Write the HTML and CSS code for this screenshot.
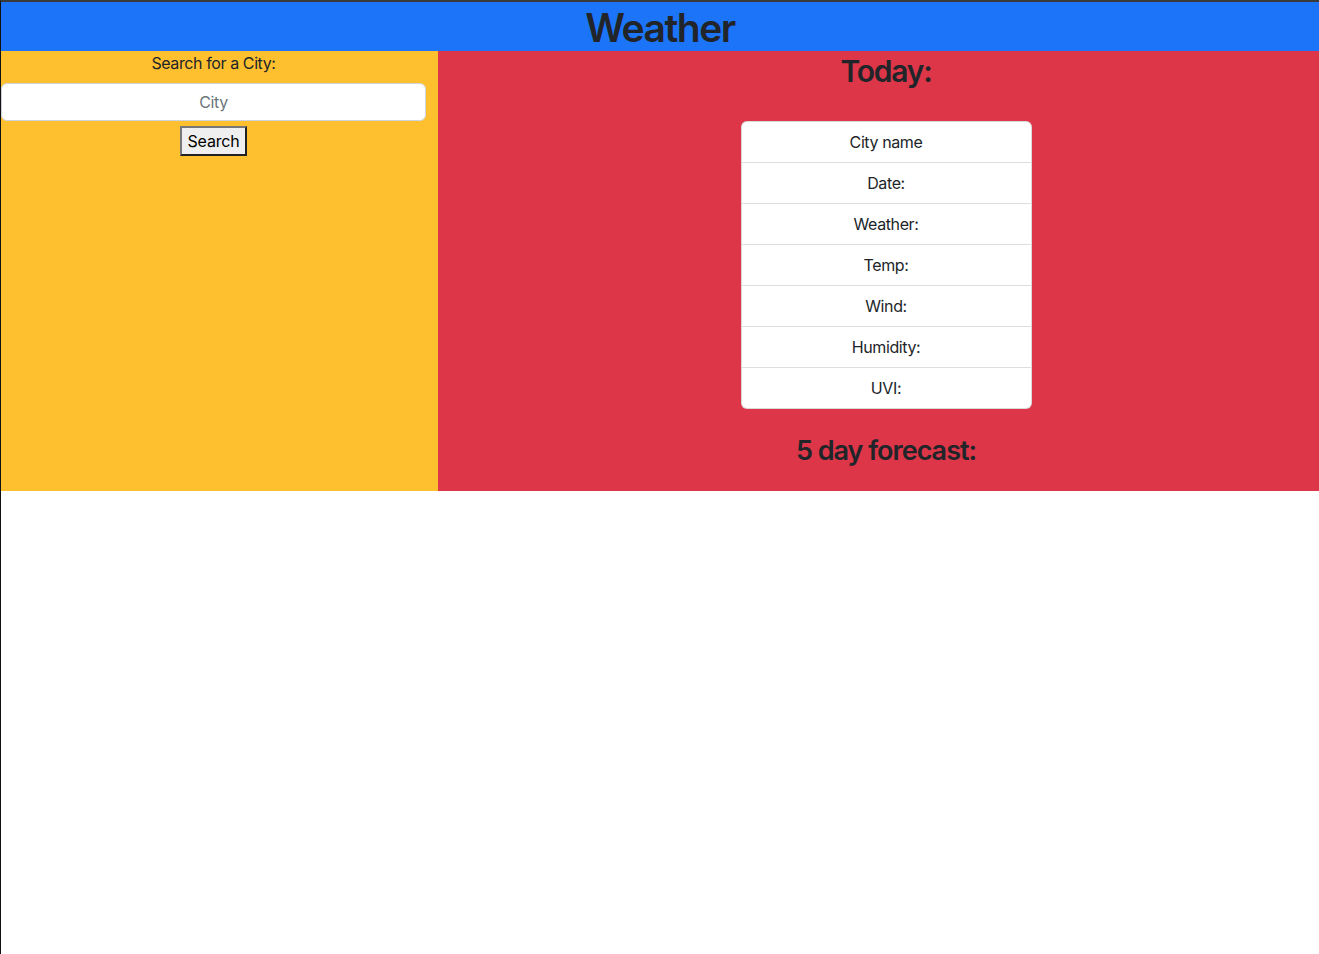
FILE: index.html
```html
<!DOCTYPE html>
<html lang="en">
<head>
<meta charset="utf-8">
<title>Weather</title>
<link rel="stylesheet" href="styles.css">
</head>
<body>
<div class="frame">
  <header class="topbar">
    <h1 class="title">Weather</h1>
  </header>
  <div class="row">
    <aside class="search-col">
      <p class="search-label">Search for a City:</p>
      <input class="city-input" type="text" placeholder="City">
      <button class="search-btn" type="button">Search</button>
    </aside>
    <main class="today-col">
      <h2 class="today-title">Today:</h2>
      <ul class="card-list">
        <li class="card-item">City name</li>
        <li class="card-item">Date:</li>
        <li class="card-item">Weather:</li>
        <li class="card-item">Temp:</li>
        <li class="card-item">Wind:</li>
        <li class="card-item">Humidity:</li>
        <li class="card-item">UVI:</li>
      </ul>
      <h3 class="forecast-title">5 day forecast:</h3>
    </main>
  </div>
</div>
</body>
</html>
```
FILE: styles.css
```css
* { box-sizing: border-box; }
html, body { margin: 0; padding: 0; background: #fff; }
body {
  font-family: Inter, "Noto Sans", "Liberation Sans", sans-serif;
  color: #212529;
  font-size: 16px;
  line-height: 1.5;
  letter-spacing: -0.4px;
}
.frame {
  min-height: 954px;
  border-top: 2px solid #3a3a3a;
  border-left: 1px solid #111;
}
.topbar {
  background: #1c74f8;
  height: 49px;
  display: flex;
  justify-content: center;
  align-items: center;
}
.title {
  margin: 0;
  font-size: 39px;
  font-weight: 600;
  line-height: 1;
  color: #212529;
  letter-spacing: -1.5px;
  transform: translateY(1px);
}
.row {
  display: flex;
  height: 440px;
}
.search-col {
  width: 437px;
  background: #ffc02f;
  padding: 0 12px 0 0;
  text-align: center;
}
.search-label {
  margin: 0;
  line-height: 24px;
  font-size: 16px;
}
.city-input {
  display: block;
  width: 100%;
  height: 38px;
  margin-top: 8px;
  border: 1px solid #ced4da;
  border-radius: 6px;
  background: #fff;
  font-family: inherit;
  font-size: 16px;
  letter-spacing: -0.4px;
  text-align: center;
  color: #212529;
  padding: 6px 12px;
}
.city-input::placeholder { color: #6c757d; }
.search-btn {
  margin-top: 5px;
  height: 30px;
  width: 67px;
  padding: 0;
  font-family: inherit;
  font-size: 16px;
  letter-spacing: -0.2px;
  color: #000;
  background: #efefef;
  border: 2px solid;
  border-color: #777 #222 #222 #777;
  border-radius: 0;
}
.today-col {
  flex: 1;
  background: #dc3648;
  padding-left: 15px;
  display: flex;
  flex-direction: column;
  align-items: center;
}
.today-title {
  margin: 0;
  font-size: 30px;
  font-weight: 600;
  line-height: 40px;
  letter-spacing: -1.2px;
}
.card-list {
  list-style: none;
  margin: 30px 0 0;
  padding: 0;
  width: 291px;
  background: #fff;
  border: 1px solid rgba(0,0,0,0.15);
  border-radius: 6px;
}
.card-item {
  height: 41px;
  line-height: 40px;
  text-align: center;
  font-size: 16px;
  border-top: 1px solid rgba(0,0,0,0.13);
}
.card-item:first-child { border-top: none; height: 40px; }
.forecast-title {
  margin: 25px 0 0;
  font-size: 27px;
  font-weight: 600;
  line-height: 34px;
  letter-spacing: -1px;
}
```
